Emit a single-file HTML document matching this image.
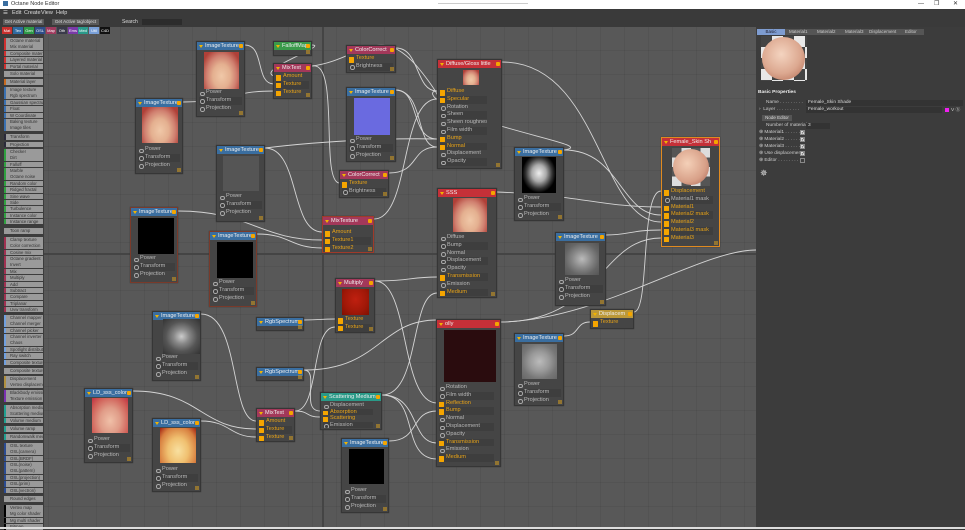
<!DOCTYPE html>
<html><head><meta charset="utf-8"><style>
*{margin:0;padding:0;box-sizing:border-box}
body{width:965px;height:529px;overflow:hidden;background:#3c3c3c;font-family:"Liberation Sans",sans-serif;position:relative}
.a{position:absolute}
#title{left:0;top:0;width:965px;height:9px;background:#fff;font-size:5.5px;line-height:9px;color:#333}
#menu{left:0;top:9px;width:965px;height:8px;background:#3a3a3a;font-size:5.5px;line-height:8px;color:#ddd}
#tool{left:0;top:17px;width:965px;height:10px;background:#3a3a3a;font-size:5px;line-height:10px;color:#ddd}
.btn{position:absolute;top:2px;height:6px;line-height:6px;background:#5a5a5a;color:#ddd;font-size:4.5px;text-align:center}
#canvas{left:44px;top:27px;width:712px;height:502px;background-color:#585858;
background-image:linear-gradient(90deg,rgba(0,0,0,.06) 1px,transparent 1px),linear-gradient(0deg,rgba(0,0,0,.06) 1px,transparent 1px);background-size:24px 24px;background-position:4px 0}
.ct{position:absolute;top:27px;height:7px;font-size:4px;line-height:7px;color:#fff;text-align:center;width:10px}
.si{position:absolute;left:4px;width:39px;height:5.6px;background:#9a9a9a;font-size:4.3px;line-height:5.6px;color:#333;padding-left:4px;white-space:nowrap;overflow:hidden;border-left:2.5px solid #999}
.n{position:absolute;background:#454545;border:1px solid #363636;box-shadow:0 0 1px #333}
.h{position:relative;height:8px;line-height:8px;font-size:5.6px;color:#eee;padding-left:8px;white-space:nowrap;overflow:hidden}
.h:before{content:"";position:absolute;left:2px;top:2.5px;border-left:2px solid transparent;border-right:2px solid transparent;border-top:3px solid #f2b400}
.h:after{content:"";position:absolute;right:1.5px;top:2px;width:4px;height:4px;background:#f5a500;border-radius:1px}
.b{background:#3a6ea0}.r{background:#c53038}.m{background:#a3385a}.g{background:#3a9a4a}.t{background:#2a9a88}.y{background:#bc9838}
.pv{position:absolute}
.rows{position:absolute;left:2px;right:2px}
.rw{height:7.8px;line-height:7.8px;font-size:5.6px;color:#b8b8b8;padding-left:7px;position:relative;white-space:nowrap;overflow:hidden}
.rw:nth-child(even){background:#3e3e3e}
.rw:before{content:"";position:absolute;left:1px;top:2.6px;width:2.5px;height:2.5px;border:0.6px solid #aaa;border-radius:50%}
.rw.c{color:#e8a317}
.rw.c:before{background:#f5a500;border-color:#f5a500;border-radius:0.5px;left:-1px;width:3.5px;height:3.5px;top:2.1px}
.gr{position:absolute;right:1px;bottom:1px;width:4px;height:4px;background:radial-gradient(circle,#d9a020 0.7px,transparent 0.9px) 0 0/2px 2px}
.skin{background:radial-gradient(ellipse at 50% 65%,#f0c8a8 0,#e4b090 35%,#d08070 60%,#b04038 85%),#b04038}
.face{background:radial-gradient(ellipse at 50% 50%,#ddd 0,#999 30%,#444 55%,#111 80%)}
.prp{position:absolute;font-size:4.8px;color:#ccc;white-space:nowrap}
.fld{position:absolute;background:#333;font-size:4.8px;color:#ddd;height:6px;line-height:6px;padding-left:2px}
.cb{position:absolute;left:800px;width:5px;height:5px;background:#ddd;border:0.5px solid #888;font-size:5px;line-height:5px;color:#333;text-align:center}
</style></head><body>
<div class="a" id="title"><span style="display:inline-block;width:5px;height:5px;background:#3a6ea0;margin:0 3px 0 3px;vertical-align:-0.5px"></span>Octane Node Editor
<span class="a" style="left:438px;top:3px;width:90px;height:1px;background:#ccc"></span>
<span class="a" style="left:918px;top:0;font-size:6px">—</span><span class="a" style="left:934px;top:0;font-size:6px">❐</span><span class="a" style="left:953px;top:0;font-size:6px">✕</span></div>
<div class="a" id="menu"><span class="a" style="left:3px">☰</span><span class="a" style="left:12px">Edit</span><span class="a" style="left:24px">Create</span><span class="a" style="left:41px">View</span><span class="a" style="left:56px">Help</span></div>
<div class="a" id="tool"><div class="btn" style="left:3px;width:41px">Get Active material</div><div class="btn" style="left:52px;width:47px">Get Active tag/object</div><span class="a" style="left:122px">Search</span><div class="a" style="left:142px;top:2px;width:40px;height:6px;background:#2c2c2c"></div></div>
<div class="a" id="canvas"></div>
<div class="a" style="left:322px;top:27px;width:2px;height:502px;background:#444"></div>
<div class="a" style="left:44px;top:253px;width:712px;height:1.5px;background:#444"></div>
<div class="a" style="left:0;top:27px;width:44px;height:502px;background:#3c3c3c"></div>
<div class="ct" style="left:2px;background:#c8302e">Mat</div><div class="ct" style="left:13px;background:#2e6aa0">Tex</div><div class="ct" style="left:24px;background:#2e9a48">Gen</div><div class="ct" style="left:35px;background:#2e4e8a">OSL</div><div class="ct" style="left:46px;background:#a03a5e">Map</div><div class="ct" style="left:57px;background:#3a3a4a">Oth</div><div class="ct" style="left:68px;background:#7a3aa8">Ems</div><div class="ct" style="left:78px;background:#2a9a8a">Med</div><div class="ct" style="left:89px;background:#7aa0d8">Util</div><div class="ct" style="left:100px;background:#111">C4D</div>

<!-- sidebar -->
<div class="si" style="top:38px;border-color:#d03030">Octane material</div><div class="si" style="top:44.4px;border-color:#d03030">Mix material</div><div class="si" style="top:50.8px;border-color:#d03030">Composite material</div><div class="si" style="top:57.2px;border-color:#d03030">Layered material</div><div class="si" style="top:63.6px;border-color:#d03030">Portal material</div>
<div class="si" style="top:71px">Solo material</div>
<div class="si" style="top:79px;border-color:#c86a20">Material layer</div>
<div class="si" style="top:87px;border-color:#3a70b0">Image texture</div><div class="si" style="top:93.4px;border-color:#3a70b0">Rgb spectrum</div><div class="si" style="top:99.8px;border-color:#3a70b0">Gaussian spectrum</div><div class="si" style="top:106.2px;border-color:#3a70b0">Float</div><div class="si" style="top:112.6px;border-color:#3a70b0">W Coordinate</div><div class="si" style="top:119px;border-color:#3a70b0">Baking texture</div><div class="si" style="top:125.4px;border-color:#3a70b0">Image tiles</div>
<div class="si" style="top:134px;border-color:#2a2a3a">Transform</div><div class="si" style="top:141.5px;border-color:#2a2a3a">Projection</div>
<div class="si" style="top:149px;border-color:#30a040">Checker</div><div class="si" style="top:155.4px;border-color:#30a040">Dirt</div><div class="si" style="top:161.7px;border-color:#30a040">Falloff</div><div class="si" style="top:168px;border-color:#30a040">Marble</div><div class="si" style="top:174.4px;border-color:#30a040">Octane noise</div><div class="si" style="top:180.8px;border-color:#30a040">Random color</div><div class="si" style="top:187.1px;border-color:#30a040">Ridged fractal</div><div class="si" style="top:193.5px;border-color:#30a040">Sine wave</div><div class="si" style="top:199.8px;border-color:#30a040">Side</div><div class="si" style="top:206.2px;border-color:#30a040">Turbulence</div><div class="si" style="top:212.5px;border-color:#30a040">Instance color</div><div class="si" style="top:218.9px;border-color:#30a040">Instance range</div>
<div class="si" style="top:228px">Toon ramp</div>
<div class="si" style="top:237px;border-color:#a03050">Clamp texture</div><div class="si" style="top:243.4px;border-color:#a03050">Color correction</div><div class="si" style="top:249.7px;border-color:#a03050">Cosine mix</div><div class="si" style="top:256px;border-color:#a03050">Octane gradient</div><div class="si" style="top:262.4px;border-color:#a03050">Invert</div><div class="si" style="top:268.8px;border-color:#a03050">Mix</div><div class="si" style="top:275.1px;border-color:#a03050">Multiply</div><div class="si" style="top:281.5px;border-color:#a03050">Add</div><div class="si" style="top:287.8px;border-color:#a03050">Subtract</div><div class="si" style="top:294.2px;border-color:#a03050">Compare</div><div class="si" style="top:300.5px;border-color:#a03050">Triplanar</div><div class="si" style="top:306.9px;border-color:#a03050">Uvw transform</div>
<div class="si" style="top:315px;border-color:#70a0e0">Channel mapper</div><div class="si" style="top:321.4px;border-color:#70a0e0">Channel merger</div><div class="si" style="top:327.7px;border-color:#70a0e0">Channel picker</div><div class="si" style="top:334px;border-color:#70a0e0">Channel inverter</div><div class="si" style="top:340.4px;border-color:#70a0e0">Chaos</div><div class="si" style="top:346.8px;border-color:#70a0e0">Spotlight distribution</div><div class="si" style="top:353.1px;border-color:#70a0e0">Ray switch</div><div class="si" style="top:359.5px;border-color:#70a0e0">Composite texture</div>
<div class="si" style="top:368px">Composite texture</div>
<div class="si" style="top:376px;border-color:#b09040">Displacement</div><div class="si" style="top:382.4px;border-color:#b09040">Vertex displacement</div>
<div class="si" style="top:390px;border-color:#7a30b0">Blackbody emission</div><div class="si" style="top:396.4px;border-color:#7a30b0">Texture emission</div>
<div class="si" style="top:405px;border-color:#20a090">Absorption medium</div><div class="si" style="top:411.4px;border-color:#20a090">Scattering medium</div><div class="si" style="top:417.8px;border-color:#20a090">Volume medium</div>
<div class="si" style="top:426px;border-color:#20a090">Volume ramp</div><div class="si" style="top:434px;border-color:#20a090">Randomwalk medium</div>
<div class="si" style="top:443px;border-color:#2a4a90">OSL texture</div><div class="si" style="top:449.4px;border-color:#2a4a90">OSL(camera)</div><div class="si" style="top:455.7px;border-color:#2a4a90">OSL(BRDF)</div><div class="si" style="top:462px;border-color:#2a4a90">OSL(noise)</div><div class="si" style="top:468.4px;border-color:#2a4a90">OSL(pattern)</div><div class="si" style="top:474.8px;border-color:#2a4a90">OSL(projection)</div><div class="si" style="top:481.1px;border-color:#2a4a90">OSL(prim)</div><div class="si" style="top:487.5px;border-color:#2a4a90">OSL(vectron)</div>
<div class="si" style="top:496px">Round edges</div>
<div class="si" style="top:505px;border-color:#000">Vertex map</div><div class="si" style="top:511.4px;border-color:#000">Mg color shader</div><div class="si" style="top:517.8px;border-color:#000">Mg multi shader</div><div class="si" style="top:524.2px;border-color:#000">Bitmap</div>

<!-- wires -->
<svg class="a" style="left:0;top:0" width="965" height="529" fill="none" stroke="#d4d4d4" stroke-width="0.9">
<path d="M245 45C265 45 255 84 274 84"/>
<path d="M183 102C230 102 230 91 274 91"/>
<path d="M312 45C330 45 255 70 274 76"/>
<path d="M312 66C340 60 320 180 339 183"/>
<path d="M312 66C360 60 380 20 420 70S420 91 437 91"/>
<path d="M396 48C420 48 415 91 437 91"/>
<path d="M396 90C420 90 410 139 437 139"/>
<path d="M396 90C425 92 415 147 437 147"/>
<path d="M265 148C330 140 400 138 437 139"/>
<path d="M265 148C300 148 290 232 322 232"/>
<path d="M389 173C420 173 410 147 437 147"/>
<path d="M374 219C410 219 400 99 437 99"/>
<path d="M502 62C600 62 600 222 661 222"/>
<path d="M178 211C250 211 260 240 322 240"/>
<path d="M257 234C290 234 290 248 322 248"/>
<path d="M497 192C580 195 600 207 661 207"/>
<path d="M564 150C620 150 620 215 661 215"/>
<path d="M564 150C600 145 480 130 437 99"/>
<path d="M606 235C630 235 630 230 661 230"/>
<path d="M501 322C600 322 600 238 661 238"/>
<path d="M634 312C650 312 640 191 661 191"/>
<path d="M564 336C580 336 575 322 590 322"/>
<path d="M375 281C410 281 410 277 437 277"/>
<path d="M375 281C410 281 400 403 437 403"/>
<path d="M304 320C320 320 320 319 335 319"/>
<path d="M304 370C380 370 380 320 437 320"/>
<path d="M304 370C320 370 300 411 320 411"/>
<path d="M382 395C420 395 410 293 437 293"/>
<path d="M382 395C420 395 410 443 437 443"/>
<path d="M382 395C420 395 400 459 437 459"/>
<path d="M295 411C320 411 310 327 335 327"/>
<path d="M295 411C310 411 305 417 320 417"/>
<path d="M201 314C240 314 230 421 256 421"/>
<path d="M133 391C200 391 200 429 256 429"/>
<path d="M201 421C230 421 230 437 256 437"/>
<path d="M389 441C420 441 410 411 437 411"/>
<path d="M501 322C600 320 700 250 756 250"/>
</svg>

<!-- nodes -->
<div class="n" style="left:196px;top:41px;width:49px;height:76px"><div class="h b">ImageTexture</div><div class="pv skin" style="left:7px;top:10px;width:35px;height:37px"></div><div class="rows" style="top:47px"><div class="rw">Power</div><div class="rw">Transform</div><div class="rw">Projection</div></div><div class="gr"></div></div>
<div class="n" style="left:273px;top:41px;width:39px;height:15px"><div class="h g">FalloffMap</div><div class="gr"></div></div>
<div class="n" style="left:273px;top:63px;width:39px;height:36px"><div class="h m">MixText</div><div class="rows" style="top:9px"><div class="rw c">Amount</div><div class="rw c">Texture</div><div class="rw c">Texture</div></div><div class="gr"></div></div>
<div class="n" style="left:346px;top:45px;width:50px;height:28px"><div class="h m">ColorCorrect</div><div class="rows" style="top:9px"><div class="rw c">Texture</div><div class="rw">Brightness</div></div><div class="gr"></div></div>
<div class="n" style="left:346px;top:87px;width:50px;height:75px"><div class="h b">ImageTexture</div><div class="pv" style="left:7px;top:10px;width:36px;height:37px;background:#6a6ae0"></div><div class="rows" style="top:48px"><div class="rw">Power</div><div class="rw">Transform</div><div class="rw">Projection</div></div><div class="gr"></div></div>
<div class="n" style="left:437px;top:59px;width:65px;height:110px"><div class="h r">Diffuse/Gloss little</div><div class="pv skin" style="left:25px;top:10px;width:16px;height:15px"></div><div class="rows" style="top:28px;right:14px"><div class="rw c">Diffuse</div><div class="rw c">Specular</div><div class="rw">Rotation</div><div class="rw">Sheen</div><div class="rw">Sheen roughness</div><div class="rw">Film width</div><div class="rw c">Bump</div><div class="rw c">Normal</div><div class="rw">Displacement</div><div class="rw">Opacity</div></div><div class="gr"></div></div>
<div class="n" style="left:135px;top:98px;width:48px;height:76px"><div class="h b">ImageTexture</div><div class="pv skin" style="left:6px;top:8px;width:36px;height:36px"></div><div class="rows" style="top:47px"><div class="rw">Power</div><div class="rw">Transform</div><div class="rw">Projection</div></div><div class="gr"></div></div>
<div class="n" style="left:216px;top:145px;width:49px;height:77px"><div class="h b">ImageTexture</div><div class="pv" style="left:6px;top:10px;width:36px;height:35px;background:#555"></div><div class="rows" style="top:47px"><div class="rw">Power</div><div class="rw">Transform</div><div class="rw">Projection</div></div><div class="gr"></div></div>
<div class="n" style="left:339px;top:170px;width:50px;height:28px"><div class="h m">ColorCorrect</div><div class="rows" style="top:9px"><div class="rw c">Texture</div><div class="rw">Brightness</div></div><div class="gr"></div></div>
<div class="n" style="left:514px;top:147px;width:50px;height:74px"><div class="h b">ImageTexture</div><div class="pv" style="left:7px;top:9px;width:34px;height:36px;background:radial-gradient(ellipse at 50% 45%,#eee 0,#aaa 30%,#333 55%,#000 70%)"></div><div class="rows" style="top:47px"><div class="rw">Power</div><div class="rw">Transform</div><div class="rw">Projection</div></div><div class="gr"></div></div>
<div class="n" style="left:661px;top:137px;width:59px;height:110px;border-color:#e08a20"><div class="h r">Female_Skin Sh</div><div class="pv" style="left:10px;top:10px;width:38px;height:38px;background:repeating-conic-gradient(#ddd 0 25%,#555 0 50%) 0 0/19px 19px"><div style="width:36px;height:36px;margin:1px;border-radius:50%;background:radial-gradient(circle at 40% 40%,#f4d0b8,#d8a088 60%,#a86050)"></div></div><div class="rows" style="top:50px;right:6px"><div class="rw c">Displacement</div><div class="rw">Material1 mask</div><div class="rw c">Material1</div><div class="rw c">Material2 mask</div><div class="rw c">Material2</div><div class="rw c">Material3 mask</div><div class="rw c">Material3</div></div><div class="gr"></div></div>
<div class="n" style="left:130px;top:207px;width:48px;height:76px;border-color:#7a3a2a"><div class="h b">ImageTexture</div><div class="pv" style="left:7px;top:10px;width:36px;height:36px;background:#000"></div><div class="rows" style="top:47px"><div class="rw">Power</div><div class="rw">Transform</div><div class="rw">Projection</div></div><div class="gr"></div></div>
<div class="n" style="left:322px;top:216px;width:52px;height:37px;border-color:#a03a2a"><div class="h m">MixTexture</div><div class="rows" style="top:12px"><div class="rw c">Amount</div><div class="rw c">Texture1</div><div class="rw c">Texture2</div></div><div class="gr"></div></div>
<div class="n" style="left:437px;top:188px;width:60px;height:110px"><div class="h r">SSS</div><div class="pv skin" style="left:15px;top:9px;width:34px;height:34px"></div><div class="rows" style="top:45px;right:8px"><div class="rw">Diffuse</div><div class="rw">Bump</div><div class="rw">Normal</div><div class="rw">Displacement</div><div class="rw">Opacity</div><div class="rw c">Transmission</div><div class="rw">Emission</div><div class="rw c">Medium</div></div><div class="gr"></div></div>
<div class="n" style="left:209px;top:231px;width:48px;height:76px;border-color:#7a3a2a"><div class="h b">ImageTexture</div><div class="pv" style="left:7px;top:10px;width:36px;height:36px;background:#000"></div><div class="rows" style="top:47px"><div class="rw">Power</div><div class="rw">Transform</div><div class="rw">Projection</div></div><div class="gr"></div></div>
<div class="n" style="left:555px;top:232px;width:51px;height:74px"><div class="h b">ImageTexture</div><div class="pv" style="left:9px;top:10px;width:34px;height:32px;background:radial-gradient(ellipse at 50% 50%,#bbb 0,#888 40%,#666 70%,#555)"></div><div class="rows" style="top:44px"><div class="rw">Power</div><div class="rw">Transform</div><div class="rw">Projection</div></div><div class="gr"></div></div>
<div class="n" style="left:335px;top:278px;width:40px;height:55px"><div class="h m">Multiply</div><div class="pv" style="left:6px;top:10px;width:27px;height:26px;background:radial-gradient(ellipse at 50% 40%,#c02010,#a01808 60%,#801000)"></div><div class="rows" style="top:37px"><div class="rw c">Texture</div><div class="rw c">Texture</div></div><div class="gr"></div></div>
<div class="n" style="left:590px;top:309px;width:44px;height:20px"><div class="h y">Displacem</div><div class="rows" style="top:9px"><div class="rw c">Texture</div></div></div>
<div class="n" style="left:152px;top:311px;width:49px;height:70px"><div class="h b">ImageTexture</div><div class="pv face" style="left:10px;top:7px;width:37px;height:35px;background:radial-gradient(ellipse at 50% 50%,#ccc 0,#888 30%,#555 60%,#333)"></div><div class="rows" style="top:42px"><div class="rw">Power</div><div class="rw">Transform</div><div class="rw">Projection</div></div><div class="gr"></div></div>
<div class="n" style="left:256px;top:317px;width:48px;height:14px"><div class="h b">RgbSpectrum</div><div class="gr"></div></div>
<div class="n" style="left:436px;top:319px;width:65px;height:148px"><div class="h r">olly</div><div class="pv" style="left:7px;top:10px;width:52px;height:52px;background:#2a0c0e"></div><div class="rows" style="top:64px;right:6px"><div class="rw">Rotation</div><div class="rw">Film width</div><div class="rw c">Reflection</div><div class="rw c">Bump</div><div class="rw">Normal</div><div class="rw">Displacement</div><div class="rw">Opacity</div><div class="rw c">Transmission</div><div class="rw">Emission</div><div class="rw c">Medium</div></div><div class="gr"></div></div>
<div class="n" style="left:514px;top:333px;width:50px;height:73px"><div class="h b">ImageTexture</div><div class="pv" style="left:7px;top:10px;width:35px;height:35px;background:radial-gradient(ellipse at 50% 50%,#bbb 0,#999 40%,#777 70%,#666)"></div><div class="rows" style="top:47px"><div class="rw">Power</div><div class="rw">Transform</div><div class="rw">Projection</div></div><div class="gr"></div></div>
<div class="n" style="left:256px;top:367px;width:48px;height:14px"><div class="h b">RgbSpectrum</div><div class="gr"></div></div>
<div class="n" style="left:320px;top:392px;width:62px;height:38px"><div class="h t">Scattering Medium</div><div class="rows" style="top:9px;right:8px"><div class="rw" style="height:6.5px;line-height:6.5px">Displacement</div><div class="rw c" style="height:6.5px;line-height:6.5px">Absorption</div><div class="rw c" style="height:6.5px;line-height:6.5px">Scattering</div><div class="rw" style="height:6.5px;line-height:6.5px">Emission</div></div><div class="gr"></div></div>
<div class="n" style="left:84px;top:388px;width:49px;height:75px"><div class="h b">LD_sss_color</div><div class="pv" style="left:7px;top:9px;width:36px;height:35px;background:radial-gradient(ellipse at 50% 65%,#f0c0a8 0,#e09c88 40%,#d06058 75%,#c03040)"></div><div class="rows" style="top:47px"><div class="rw">Power</div><div class="rw">Transform</div><div class="rw">Projection</div></div><div class="gr"></div></div>
<div class="n" style="left:256px;top:408px;width:39px;height:34px"><div class="h m">MixText</div><div class="rows" style="top:9px"><div class="rw c">Amount</div><div class="rw c">Texture</div><div class="rw c">Texture</div></div><div class="gr"></div></div>
<div class="n" style="left:152px;top:418px;width:49px;height:74px"><div class="h b">LD_sss_color</div><div class="pv" style="left:7px;top:9px;width:36px;height:35px;background:radial-gradient(ellipse at 50% 65%,#f8e0a0 0,#f0c070 40%,#d88040 75%,#a02010)"></div><div class="rows" style="top:47px"><div class="rw">Power</div><div class="rw">Transform</div><div class="rw">Projection</div></div><div class="gr"></div></div>
<div class="n" style="left:341px;top:438px;width:48px;height:75px"><div class="h b">ImageTexture</div><div class="pv" style="left:7px;top:10px;width:35px;height:35px;background:#000"></div><div class="rows" style="top:48px"><div class="rw">Power</div><div class="rw">Transform</div><div class="rw">Projection</div></div><div class="gr"></div></div>

<!-- right panel -->
<div class="a" style="left:756px;top:27px;width:209px;height:502px;background:#3c3c3c"></div>
<div class="a" style="left:757px;top:29px;width:167px;height:6px;background:#555;font-size:4.5px;line-height:6px;color:#ccc">
<span class="a" style="left:0;width:28px;height:6px;background:#7e9cd0;color:#223;text-align:center">Basic</span><span class="a" style="left:32px">Material1</span><span class="a" style="left:60px">Material2</span><span class="a" style="left:88px">Material3</span><span class="a" style="left:112px">Displacement</span><span class="a" style="left:148px">Editor</span></div>
<div class="a" style="left:761px;top:36px;width:46px;height:45px;background:repeating-conic-gradient(#e8e8e8 0 25%,#444 0 50%) 0 0/22px 22px"><div style="position:absolute;left:1px;top:1px;width:43px;height:43px;border-radius:50%;background:radial-gradient(circle at 45% 40%,#f4d4c0,#dca890 55%,#b06850)"></div></div>
<div class="prp" style="left:758px;top:90px;font-weight:bold;color:#eee">Basic Properties</div>
<div class="prp" style="left:766px;top:100px">Name . . . . . . . . .</div><div class="fld" style="left:806px;top:100px;width:157px">Female_Skin Shade</div>
<div class="prp" style="left:759px;top:107px">›&nbsp; Layer . . . . . . . . .</div><div class="fld" style="left:806px;top:107px;width:136px">Female_workout</div>
<div class="a" style="left:945px;top:108px;width:4px;height:4px;background:#f020f0"></div><div class="prp" style="left:951px;top:106px">V ⓑ</div>
<div class="a" style="left:762px;top:115px;width:30px;height:6px;background:#555;font-size:4.5px;line-height:6px;color:#ddd;text-align:center">Node Editor</div>
<div class="prp" style="left:766px;top:123px">Number of materials</div><div class="fld" style="left:806px;top:123px;width:24px">3</div>
<div class="prp" style="left:759px;top:130px">⊛ Material1 . . . . . .</div><div class="cb" style="top:130px">✓</div>
<div class="prp" style="left:759px;top:137px">⊛ Material2 . . . . . .</div><div class="cb" style="top:137px">✓</div>
<div class="prp" style="left:759px;top:144px">⊛ Material3 . . . . . .</div><div class="cb" style="top:144px">✓</div>
<div class="prp" style="left:759px;top:151px">⊛ Use displacement</div><div class="cb" style="top:151px">✓</div>
<div class="prp" style="left:759px;top:158px">⊛ Editor . . . . . . . .</div><div class="cb" style="top:158px;background:#3c3c3c"></div>
<div class="a" style="left:760px;top:168px;font-size:9px;color:#ddd">✵</div>
<div class="a" style="left:0;top:527px;width:965px;height:2px;background:#ddd"></div>
</body></html>
